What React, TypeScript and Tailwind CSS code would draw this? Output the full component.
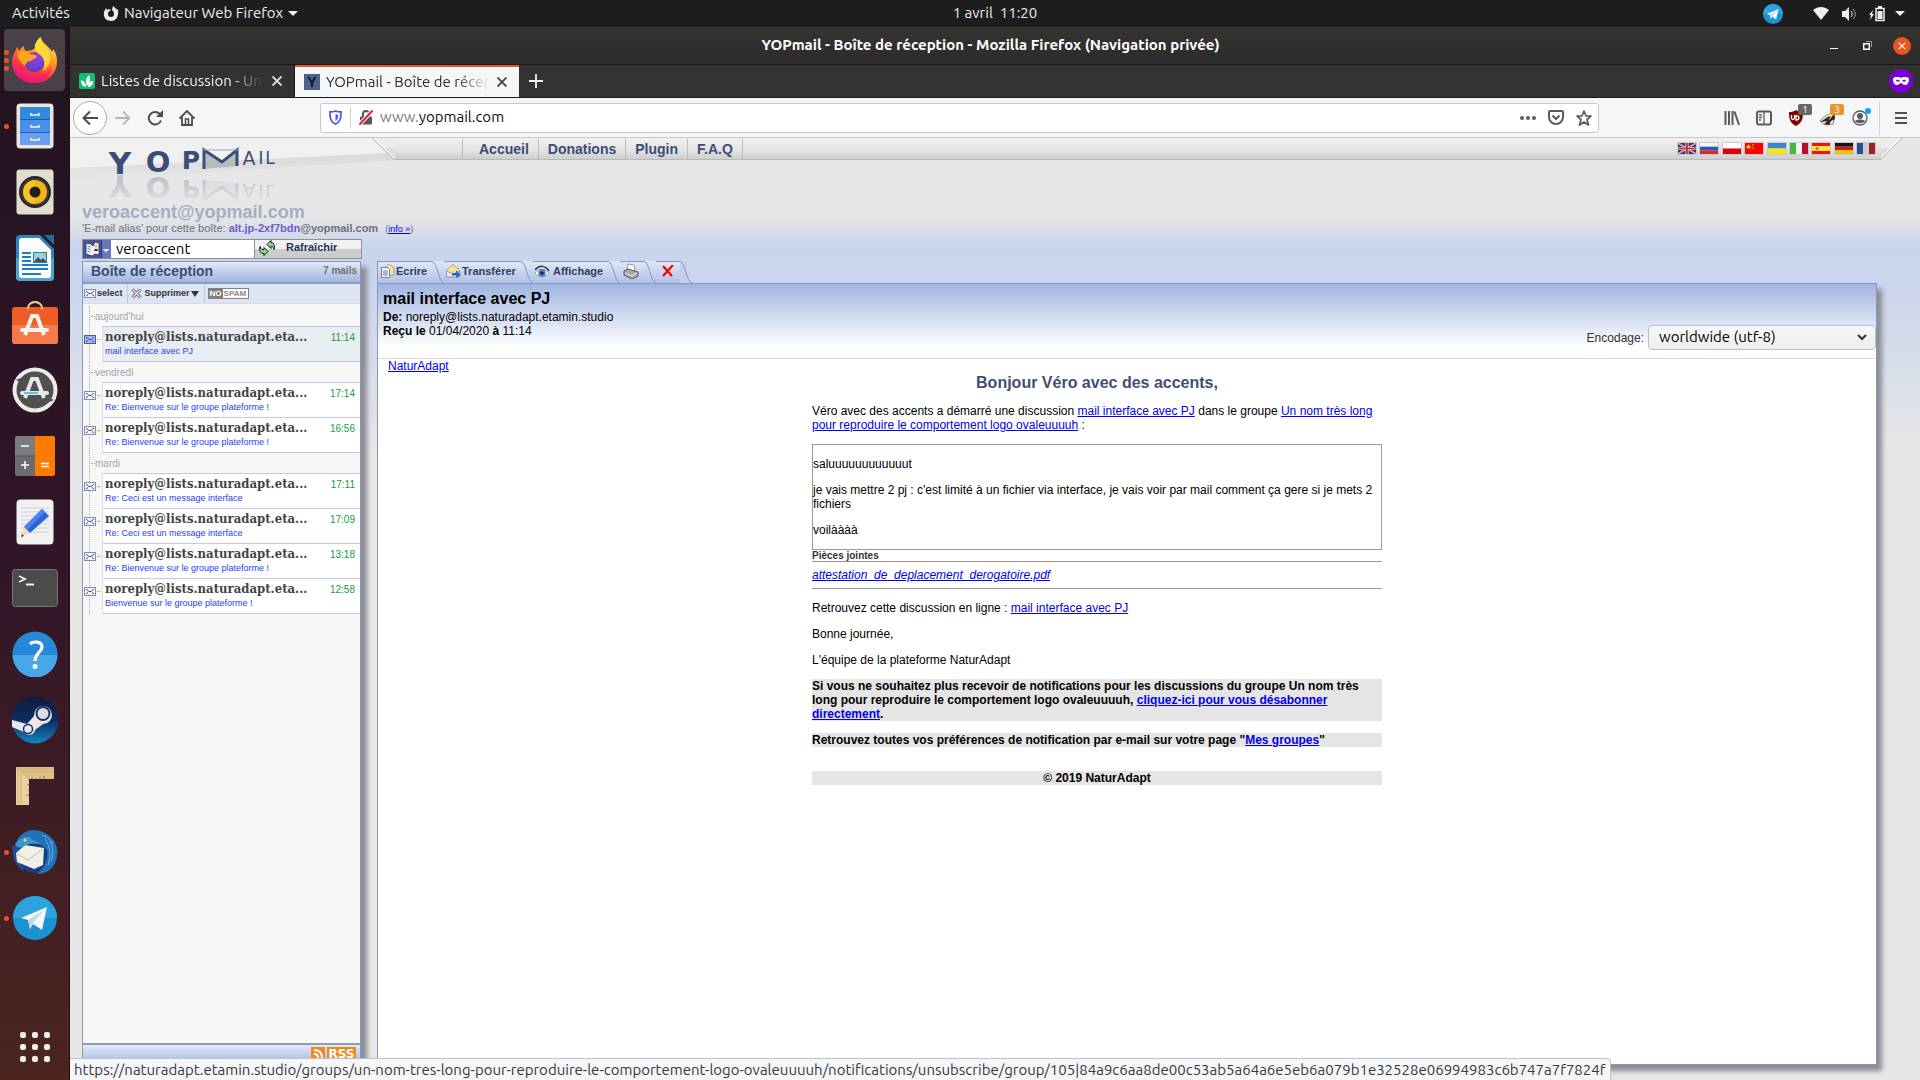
import type { ReactNode } from "react";

const UI_FONT = "font-['Ubuntu','Noto_Sans',sans-serif]";
const LINK = "text-[#0000ee] underline";

const groups = [
  {
    day: "aujourd'hui",
    mails: [{ time: "11:14", subject: "mail interface avec PJ", active: true }],
  },
  {
    day: "vendredi",
    mails: [
      { time: "17:14", subject: "Re: Bienvenue sur le groupe plateforme !" },
      { time: "16:56", subject: "Re: Bienvenue sur le groupe plateforme !" },
    ],
  },
  {
    day: "mardi",
    mails: [
      { time: "17:11", subject: "Re: Ceci est un message interface" },
      { time: "17:09", subject: "Re: Ceci est un message interface" },
      { time: "13:18", subject: "Re: Bienvenue sur le groupe plateforme !" },
      { time: "12:58", subject: "Bienvenue sur le groupe plateforme !" },
    ],
  },
];

/* ---------- Dock icons ---------- */

function FirefoxIcon() {
  return (
    <svg viewBox="0 0 46 46" className="size-[46px]">
      <defs>
        <linearGradient id="fx1" x1="0.8" y1="0" x2="0.3" y2="1">
          <stop offset="0" stopColor="#fff44f" />
          <stop offset="0.4" stopColor="#ff9a1f" />
          <stop offset="0.7" stopColor="#ff3647" />
          <stop offset="1" stopColor="#e31587" />
        </linearGradient>
        <radialGradient id="fx2" cx="0.5" cy="0.3" r="0.8">
          <stop offset="0" stopColor="#a238d8" />
          <stop offset="0.6" stopColor="#6a42d8" />
          <stop offset="1" stopColor="#4b2fae" />
        </radialGradient>
      </defs>
      <path d="M5 10c1 2 2 3 2 4 1-2 3-4 5-5 0 2 0 4 2 5 4 0 7-1 9-3-1-4 2-8 6-11 0 5 6 8 9 12 1 1 2 2 2 3 1-1 1-2 1-3 4 5 5 12 3 19-3 9-11 15-21 15C10 46 0 38 0 25 0 18 3 16 5 10z" fill="url(#fx1)" />
      <circle cx="22.500" cy="25" r="10" fill="url(#fx2)" />
      <path d="M6 16c5-4 9-2 12 1 2 1 5 0 7 2-1 3-5 3-6 5-3 0-5 1-6 5-4-3-8-7-7-13z" fill="#ffa21c" />
      <path d="M28 0c0 6 7 9 9 16 3 8-1 15-6 18 2-5 2-10-1-14-2-3-7-4-7-9 0-4 2-8 5-11z" fill="#ffdf3a" opacity="0.850" />
      <path d="M2 31c4 8 12 11 20 10 8 0 15-5 18-12-1 9-8 17-18 17C12 46 4 40 2 31z" fill="#f0186f" opacity="0.600" />
    </svg>
  );
}

function FilesIcon() {
  return (
    <svg viewBox="0 0 38 46" className="h-[46px] w-[38px]">
      <rect x="0.500" y="0.500" width="37" height="45" rx="4" fill="#ebe7df" />
      <rect x="4" y="4" width="30" height="13" fill="#2f8ae0" />
      <rect x="4" y="17" width="30" height="13" fill="#4990ea" />
      <rect x="4" y="30" width="30" height="12" fill="#6b9df2" />
      <path d="M4 16.500h30M4 29.500h30" stroke="#1a5fae" />
      <path d="M15 10v2h8v-2M15 22v2h8v-2M15 35v2h8v-2" stroke="#f2f2f2" strokeWidth="1.600" fill="none" />
    </svg>
  );
}

function SpeakerIcon() {
  return (
    <svg viewBox="0 0 38 46" className="h-[46px] w-[38px]">
      <rect x="0.500" y="0.500" width="37" height="45" rx="3" fill="#e3ddd0" />
      <circle cx="19" cy="23" r="16" fill="#24262e" />
      <circle cx="19" cy="23" r="14" fill="#3b3b3f" />
      <circle cx="19" cy="23" r="12" fill="#f2b712" />
      <path d="M7.500 20a12 12 0 0 1 11-9v24a12 12 0 0 1-11-9z" fill="#fcd53a" opacity="0.500" />
      <circle cx="19" cy="23" r="5.500" fill="#1f1f1f" />
    </svg>
  );
}

function WriterIcon() {
  return (
    <svg viewBox="0 0 38 46" className="h-[46px] w-[38px]">
      <path d="M4 0h20l14 14v28a4 4 0 0 1-4 4H4a4 4 0 0 1-4-4V4a4 4 0 0 1 4-4z" fill="#2c86ba" />
      <path d="M28 0h10v10z" fill="#1d6d9d" />
      <path d="M0 23h38v19a4 4 0 0 1-4 4H4a4 4 0 0 1-4-4z" fill="#4ba5d3" />
      <path d="M6 3h17l12 12v25a3 3 0 0 1-3 3H6a3 3 0 0 1-3-3V6a3 3 0 0 1 3-3z" fill="#fdfdfd" />
      <path d="M6 18h9M6 22h9M6 26h9M6 30h26M6 34h26M6 39h19" stroke="#1c80bd" strokeWidth="2" />
      <rect x="17.500" y="17.500" width="13" height="10" fill="#9bd0ee" stroke="#1c80bd" />
      <path d="M18 27l4-5 3 3 2-2 4 4z" fill="#4a4a4a" />
      <circle cx="28.500" cy="19.500" r="1.500" fill="#f5a623" />
    </svg>
  );
}

function BigA({ color }: { color: string }) {
  return (
    <g fill="none" stroke={color} strokeWidth="4">
      <path d="M13 31 20 12h5l7 19" />
      <path d="M10 26h25" strokeLinecap="round" />
    </g>
  );
}

function SoftwareIcon() {
  return (
    <svg viewBox="0 2 46 46" className="size-[46px]">
      <path d="M16 12V9a7 6 0 0 1 14 0v3" fill="none" stroke="#f3c58d" strokeWidth="2" />
      <rect x="0" y="8" width="46" height="37" rx="3" fill="#ee5d28" />
      <path d="M0 26h46v16a3 3 0 0 1-3 3H3a3 3 0 0 1-3-3z" fill="#f37a4a" />
      <path d="M16 11V9a7 6 0 0 1 14 0v2" fill="none" stroke="#f3c58d" strokeWidth="1.500" />
      <g transform="translate(0 5)">
        <BigA color="#fdf3ee" />
      </g>
    </svg>
  );
}

function UpdaterIcon() {
  return (
    <svg viewBox="0 0 46 46" className="size-[46px]">
      <circle cx="23" cy="23" r="22" fill="#505050" />
      <circle cx="23" cy="23" r="20.500" fill="none" stroke="#ececec" strokeWidth="4" />
      <path d="M4 13l7-3-3 5zM42 33l-7 3 3-5z" fill="#505050" />
      <BigA color="#e8e8e8" />
      <path d="M12 26h14" stroke="#32b8ef" strokeWidth="1.500" />
    </svg>
  );
}

function CalculatorIcon() {
  return (
    <svg viewBox="0 0 40 40" className="size-[40px]">
      <path d="M2 0h18v20H0V2a2 2 0 0 1 2-2z" fill="#7c7c80" />
      <path d="M0 20h20v20H2a2 2 0 0 1-2-2z" fill="#6b6b70" />
      <path d="M20 0h18a2 2 0 0 1 2 2v36a2 2 0 0 1-2 2H20z" fill="#ff7b00" />
      <path d="M6 10h8M6 29h8M10 25v8M26 27.500h8M26 30.500h8" stroke="#fff" strokeWidth="1.500" />
      <path d="M0 20h20" stroke="#505054" />
    </svg>
  );
}

function NotesIcon() {
  return (
    <svg viewBox="0 0 38 46" className="h-[46px] w-[38px]">
      <rect x="0.500" y="0.500" width="37" height="45" rx="4" fill="#f1f1f1" />
      <path d="M5 9h28M5 13h28M5 17h28M5 21h28M5 25h28M5 29h28M5 33h28" stroke="#cfcfcf" />
      <path d="M26 10l7 7-19 17-6-6z" fill="#2f62d9" />
      <path d="M26 10l3 3-18 18-3-3z" fill="#4a80f0" />
      <path d="M8 28l6 6-9 4z" fill="#f7d9b5" />
      <path d="M6 35l-1 3 3-1z" fill="#333" />
    </svg>
  );
}

function TerminalIcon() {
  return (
    <svg viewBox="0 0 46 38" className="h-[38px] w-[46px]">
      <rect x="0.500" y="0.500" width="45" height="37" rx="3" fill="#4b4b4b" stroke="#777" />
      <path d="M7 7l6 3-6 3M14 15.500h8" fill="none" stroke="#f4f4f4" strokeWidth="1.800" />
    </svg>
  );
}

function HelpIcon() {
  return (
    <svg viewBox="0 0 46 46" className="size-[46px]">
      <circle cx="23" cy="23" r="22.500" fill="#2588d8" />
      <path d="M.5 24a22.500 22.500 0 0 0 45 0z" fill="#48a5e6" />
      <path d="M18 13c3-3 12-3 12 3 0 5-7 6-7 14" fill="none" stroke="#fff" strokeWidth="3.200" />
      <circle cx="23" cy="35.500" r="2.500" fill="#fff" />
    </svg>
  );
}

function SteamIcon() {
  return (
    <svg viewBox="0 0 48 48" className="size-[48px]">
      <defs>
        <linearGradient id="steam" x1="0" y1="0" x2="0" y2="1">
          <stop offset="0" stopColor="#101c38" />
          <stop offset="0.5" stopColor="#0d2c63" />
          <stop offset="1" stopColor="#1485b9" />
        </linearGradient>
      </defs>
      <circle cx="24" cy="24" r="23.500" fill="url(#steam)" />
      <path d="M1 24l15 4 7-8a9 9 0 1 1 9 8l-8 6a6 6 0 0 1-11 2L1 31z" fill="#ebe6e8" />
      <circle cx="32" cy="17.500" r="6.500" fill="#dfdde3" stroke="#173063" strokeWidth="2" />
      <circle cx="17" cy="33" r="4.500" fill="none" stroke="#173063" strokeWidth="1.500" />
    </svg>
  );
}

function RulerIcon() {
  return (
    <svg viewBox="0 0 38 38" className="size-[38px]">
      <path d="M0 0h38v12H13v26H0z" fill="#dfc28b" />
      <path d="M0 0l13 12v26H0z" fill="#e9d09e" />
      <path d="M0 0l13 12M2 2v35M5 5v32M3 2h34M6 5h31" stroke="#c9a566" strokeWidth="0.700" />
      <path d="M16 12v-2m4 2v-1m4 1v-2m4 2V9M13 18h-2m2 5h-1m1 5h-3" stroke="#7d6236" strokeWidth="0.800" />
    </svg>
  );
}

function ThunderbirdIcon() {
  return (
    <svg viewBox="0 0 46 46" className="size-[46px]">
      <circle cx="24" cy="23" r="21" fill="#173f7d" />
      <path d="M6 10C12 0 24-1 33 4c12 6 15 19 10 30-3 7-10 11-18 11 8-7 12-15 10-24-4-6-12-8-18-6-5 2-8 4-11 2-2-2-2-4 0-7z" fill="#2471b8" />
      <path d="M33 10c5 7 7 16 3 26M38 12c3 7 4 13 1 20M30 6c4 1 8 4 11 9" stroke="#62b4e6" fill="none" />
      <path d="M0 17c0 12 4 20 12 26-2-9-3-17 2-27z" fill="#1f4e91" />
      <path d="M4 24l9-8 19 3-1 17-9 4-17-7z" fill="#f2efe6" />
      <path d="M5 25l11 6 15-11" fill="none" stroke="#c3bdad" />
      <path d="M3 15c4-5 9-8 15-7 2 4 8 5 12 7-7-1-14-1-20 3-3 1-6 0-7-3z" fill="#3f94d2" />
      <circle cx="13" cy="11" r="1.500" fill="#ffd65a" />
    </svg>
  );
}

function TelegramIcon({ className }: { className: string }) {
  return (
    <svg viewBox="0 0 44 44" className={className}>
      <circle cx="22" cy="22" r="22" fill="#1c93d1" />
      <path d="M0 22a22 22 0 0 1 44 0z" fill="#2ca3de" />
      <path d="M8 22l26-11-5 23-9-6-3 5-2-9z" fill="#f4f8fb" />
      <path d="M15 24l16-10-11 13-3 6z" fill="#c1d9ea" />
    </svg>
  );
}

function RunningDots({ count }: { count: number }) {
  return (
    <span className="absolute left-1 flex flex-col gap-[3px]">
      {[...Array(count)].map((_, i) => (
        <span key={i} className="size-[5px] rounded-full bg-[#e95420]" />
      ))}
    </span>
  );
}

function DockItem({ label, dots = 0, active, children }: { label: string; dots?: number; active?: boolean; children: ReactNode }) {
  return (
    <button aria-label={label} className="relative flex h-[66px] w-full items-center justify-center">
      {active && <span className="absolute inset-x-1 inset-y-[2px] rounded-[4px] bg-[#4a4047]" />}
      <span className="relative">{children}</span>
      {dots > 0 && <RunningDots count={dots} />}
    </button>
  );
}

function Dock() {
  return (
    <nav className="flex w-[70px] shrink-0 flex-col border-r border-[#1a1016] bg-linear-to-b from-[#22131f] via-[#311528] to-[#4b251e]">
      <DockItem label="Firefox" dots={3} active><FirefoxIcon /></DockItem>
      <DockItem label="Fichiers" dots={1}><FilesIcon /></DockItem>
      <DockItem label="Rhythmbox"><SpeakerIcon /></DockItem>
      <DockItem label="Writer"><WriterIcon /></DockItem>
      <DockItem label="Logiciels"><SoftwareIcon /></DockItem>
      <DockItem label="Mises à jour"><UpdaterIcon /></DockItem>
      <DockItem label="Calculatrice"><CalculatorIcon /></DockItem>
      <DockItem label="Notes"><NotesIcon /></DockItem>
      <DockItem label="Terminal"><TerminalIcon /></DockItem>
      <DockItem label="Aide"><HelpIcon /></DockItem>
      <DockItem label="Steam"><SteamIcon /></DockItem>
      <DockItem label="Règle"><RulerIcon /></DockItem>
      <DockItem label="Thunderbird" dots={1}><ThunderbirdIcon /></DockItem>
      <DockItem label="Telegram" dots={1}><TelegramIcon className="size-[44px]" /></DockItem>
      <button aria-label="Applications" className="mt-auto grid h-[66px] grid-cols-[6px_6px_6px] place-content-center gap-[6px]">
        {[...Array(9)].map((_, i) => (
          <span key={i} className="size-[6px] rounded-[2px] bg-[#eeeeec]" />
        ))}
      </button>
    </nav>
  );
}

/* ---------- Gnome top bar ---------- */

function TopBar() {
  return (
    <header className={`grid h-[27px] shrink-0 grid-cols-[70px_1fr_auto_1fr] items-center bg-[#1d1d1d] text-[15px] text-[#eeeeec] ${UI_FONT}`}>
      <button className="pl-3 text-left">Activités</button>
      <button className="flex items-center gap-[5px] pl-[33px]">
        <svg viewBox="0 0 16 16" className="size-4">
          <path d="M3 2l1 2 2-1 2 1c-1 1-3 1-3 4a3 3 0 0 0 6 0c0-2-1-3-2-4L10 0c1 1 3 2 4 4l1-1c1 8-2 12-7 12S0 11 1 6z" fill="#eeeeec" />
        </svg>
        Navigateur Web Firefox
        <svg viewBox="0 0 10 5" className="h-[5px] w-[10px]"><path d="M0 0h10L5 5z" fill="#eeeeec" /></svg>
      </button>
      <time className="whitespace-pre">1 avril  11:20</time>
      <div className="flex items-center justify-end pr-[15px]">
        <TelegramIcon className="mr-[30px] size-5" />
        <svg viewBox="0 0 16 13" className="mr-[12px] h-[13px] w-4"><path d="M0 3c5-4 11-4 16 0L8 13z" fill="#eeeeec" /></svg>
        <svg viewBox="0 0 16 14" className="mr-[12px] h-[14px] w-4">
          <path d="M1 4h3l4-4v14L4 10H1z" fill="#eeeeec" />
          <path d="M10 4c1.500 2 1.500 4 0 6" stroke="#eeeeec" fill="none" />
          <path d="M12 2c3 3 3 7 0 10" stroke="#aaa" fill="none" />
        </svg>
        <svg viewBox="0 0 16 16" className="mr-[10px] size-4">
          <path d="M4 4 0 9h2l-1 5 4-6H3z" fill="#eeeeec" />
          <path d="M7 2.500h8v12H7z" stroke="#eeeeec" strokeWidth="1.500" fill="none" />
          <path d="M9 0h4v2H9zM8.500 5h5v8h-5z" fill="#eeeeec" />
        </svg>
        <svg viewBox="0 0 10 5" className="h-[5px] w-[10px]"><path d="M0 0h10L5 5z" fill="#eeeeec" /></svg>
      </div>
    </header>
  );
}

/* ---------- Firefox chrome ---------- */

function CloseX({ color }: { color: string }) {
  return (
    <svg viewBox="0 0 10 10" className="size-[10px]">
      <path d="M.5.5l9 9M9.500.5l-9 9" stroke={color} strokeWidth="1.800" />
    </svg>
  );
}

function TitleBar() {
  return (
    <div className={`grid h-[37px] grid-cols-[1fr_auto_1fr] items-center bg-linear-to-b from-[#353430] to-[#2c2a2b] pr-[9px] text-[15px] font-bold text-white ${UI_FONT}`}>
      <span />
      <h1>YOPmail - Boîte de réception - Mozilla Firefox (Navigation privée)</h1>
      <div className="flex items-center justify-end">
        <button aria-label="Réduire" className="mr-[25px] flex h-4 w-2 items-end pb-[5px]"><span className="h-px w-full bg-white" /></button>
        <button aria-label="Restaurer" className="mr-[21px]">
          <svg viewBox="0 0 9 9" className="size-[9px]">
            <path d="M.7 2.700h5.600v5.600H.7z" stroke="#fff" strokeWidth="1.400" fill="none" />
            <path d="M3 .5h5.500V6" stroke="#999" fill="none" />
          </svg>
        </button>
        <button aria-label="Fermer" className="flex size-[18px] items-center justify-center rounded-full bg-[#e95420]">
          <svg viewBox="0 0 10 10" className="size-2"><path d="M1 1l8 8M9 1L1 9" stroke="#fff" strokeWidth="1.500" /></svg>
        </button>
      </div>
    </div>
  );
}

function TabBar() {
  return (
    <div className={`flex h-[34px] border-y border-[#1a1919] bg-[#333132] text-[15px] ${UI_FONT}`}>
      <div className="flex w-[225px] items-center border-r border-[#1a1919] pr-3 pl-[9px] text-[#f5f5f5]">
        <svg viewBox="0 0 16 16" className="mr-[6px] size-4 shrink-0">
          <rect width="16" height="16" rx="2" fill="#0fbf78" />
          <path d="M7 14C3 13 2 10 2 7c3 1 5 3 5 7zM8 13C6 9 7 5 10 2c2 4 1 8-2 11zM9 14c0-4 2-6 5-6 0 4-2 6-5 6z" fill="#fff" />
        </svg>
        <span className="mr-2 min-w-0 flex-1 overflow-hidden whitespace-nowrap [mask-image:linear-gradient(to_right,#000_78%,transparent)]">Listes de discussion - Un</span>
        <button aria-label="Fermer l'onglet"><CloseX color="#e6e6e6" /></button>
      </div>
      <div className="flex w-[224px] items-center border-t-2 border-[#e95420] bg-[#f5f6f7] pr-3 pl-[9px] text-[#2b2b2b]">
        <span className="mr-[6px] flex size-4 shrink-0 items-center justify-center bg-[#4d6287] font-['Liberation_Sans',sans-serif] text-[14px] font-bold text-[#10102c]">Y</span>
        <span className="mr-2 min-w-0 flex-1 overflow-hidden whitespace-nowrap [mask-image:linear-gradient(to_right,#000_80%,transparent)]">YOPmail - Boîte de réception</span>
        <button aria-label="Fermer l'onglet"><CloseX color="#444" /></button>
      </div>
      <button aria-label="Nouvel onglet" className="ml-[10px]">
        <svg viewBox="0 0 14 14" className="size-[14px]"><path d="M7 0v14M0 7h14" stroke="#f0f0f0" strokeWidth="1.800" /></svg>
      </button>
      <span className="mt-1 mr-[7px] ml-auto flex size-6 items-center justify-center rounded-full bg-[#7d00d3]">
        <svg viewBox="0 0 16 8" className="h-2 w-4">
          <path d="M0 2c0-2 5-3 8-1 3-2 8-1 8 1 0 4-2 6-4 6S9 6 8 6 6 8 4 8 0 6 0 2z" fill="#fff" />
          <path d="M3 4c1-2 3-1 4 0-1 1-3 1-4 0zM9 4c1-1 3-2 4 0-1 1-3 1-4 0z" fill="#7d00d3" />
        </svg>
      </span>
    </div>
  );
}

function Toolbar() {
  return (
    <div className={`flex h-[40px] items-center border-b border-[#c4c6c9] bg-[#f5f6f8] text-[15px] ${UI_FONT}`}>
      <button aria-label="Page précédente" className="ml-[3px] flex size-[34px] items-center justify-center rounded-full border border-[#ababab] bg-white">
        <svg viewBox="0 0 16 16" className="size-4"><path d="M16 8H1.500M8 1.500L1.500 8 8 14.500" stroke="#4a4a4c" strokeWidth="2" fill="none" /></svg>
      </button>
      <button aria-label="Page suivante" className="ml-2"><svg viewBox="0 0 16 16" className="size-4"><path d="M0 8h14.500M8 1.500L14.500 8 8 14.500" stroke="#b5b6b8" strokeWidth="1.800" fill="none" /></svg></button>
      <button aria-label="Actualiser" className="ml-4">
        <svg viewBox="0 0 16 16" className="size-4">
          <path d="M14 10.500A6.300 6.300 0 1 1 12.800 4" stroke="#4a4a4c" strokeWidth="2" fill="none" />
          <path d="M16 0v7H9z" fill="#4a4a4c" />
        </svg>
      </button>
      <button aria-label="Accueil du navigateur" className="ml-4">
        <svg viewBox="0 0 16 16" className="size-4">
          <path d="M.5 8.500L8 1l7.500 7.500M3 7v8h10V7" stroke="#4a4a4c" strokeWidth="1.800" fill="none" />
          <path d="M6.500 9h3v6h-3z" fill="none" stroke="#4a4a4c" strokeWidth="1.500" />
        </svg>
      </button>

      <div className="ml-[125px] flex h-[30px] flex-1 items-center rounded-[3px] border border-[#c3c9d2] bg-white pr-[6px] pl-2">
        <svg viewBox="0 0 14 16" className="h-[15px] w-[13px]">
          <path d="M7 1c2 1 4 1 6 1 0 7-1 11-6 13C2 13 1 9 1 2c2 0 4 0 6-1z" fill="none" stroke="#5a4fe0" strokeWidth="1.800" />
          <path d="M7 4v8c2-1 3-3 3-7-1 0-2 0-3-1z" fill="#3f68ea" />
        </svg>
        <span className="mx-2 h-[22px] w-px bg-[#cfd0d3]" />
        <svg viewBox="0 0 14 15" className="h-[15px] w-[14px]">
          <path d="M4 7V4a3 3 0 0 1 6 0v3" fill="none" stroke="#55565a" strokeWidth="2" />
          <rect x="1" y="6.500" width="12" height="8" rx="1" fill="#55565a" />
          <path d="M.5 14.500L13.500.5" stroke="#fff" strokeWidth="4" />
          <path d="M.5 14.500L13.500.5" stroke="#e8183e" strokeWidth="2" />
        </svg>
        <label htmlFor="url" className="ml-[7px] text-[#7b7b7d]">www.</label>
        <input id="url" defaultValue="yopmail.com" className="min-w-0 flex-1 bg-transparent text-[#0c0c0d] outline-none" />
        <button aria-label="Actions"><svg viewBox="0 0 16 4" className="h-1 w-4"><g fill="#5b5b5e"><circle cx="2" cy="2" r="2" /><circle cx="8" cy="2" r="2" /><circle cx="14" cy="2" r="2" /></g></svg></button>
        <button aria-label="Pocket" className="ml-3">
          <svg viewBox="0 0 16 15" className="h-[15px] w-4">
            <path d="M2 1h12a1 1 0 0 1 1 1v5a7 7 0 0 1-14 0V2a1 1 0 0 1 1-1z" fill="none" stroke="#5b5b5e" strokeWidth="2" />
            <path d="M4.500 5.500L8 9l3.500-3.500" fill="none" stroke="#5b5b5e" strokeWidth="2" />
          </svg>
        </button>
        <button aria-label="Marque-page" className="ml-3">
          <svg viewBox="0 0 16 16" className="size-4"><path d="M8 1l2 5h5l-4 3.500 1.500 5.500L8 12l-4.500 3L5 9.500 1 6h5z" fill="none" stroke="#5b5b5e" strokeWidth="1.700" strokeLinejoin="round" /></svg>
        </button>
      </div>

      <div className="ml-[125px] flex items-center gap-4">
        <svg viewBox="0 0 16 16" className="size-4"><path d="M1.500 1v14M5 1v14M8.500 1v14M10.500 1.500L15 15" stroke="#5b5b5e" strokeWidth="2" /></svg>
        <svg viewBox="0 0 16 16" className="size-4">
          <rect x="1" y="1.500" width="14" height="13" rx="2" fill="none" stroke="#5b5b5e" strokeWidth="2" />
          <path d="M8 2v12M3 5h3M3 7.500h3M3 10h2" stroke="#5b5b5e" strokeWidth="1.300" />
        </svg>
        <span className="relative">
          <svg viewBox="0 0 16 16" className="size-4">
            <path d="M8 0c2 1.500 4 2 7 2 0 7-1 11-7 14C2 13 1 9 1 2c3 0 5-.5 7-2z" fill="#800000" />
            <path d="M3.500 5v3c0 2 3 2 3 0V5M8 5v5c4 0 4-5 0-4" fill="none" stroke="#fff" strokeWidth="1.300" />
          </svg>
          <span className="absolute -top-[6px] left-[10px] flex h-[11px] w-[14px] items-center justify-center rounded-[2px] bg-[#666] text-[10px] text-white">1</span>
        </span>
        <span className="relative">
          <svg viewBox="0 0 16 16" className="size-4">
            <path d="M0 11c3-4 7-6 12-8l3 3-2 8-8 1z" fill="#f1efe9" stroke="#b7763a" />
            <path d="M0 12c4-2 6-5 11-6l-3 5zM4 14l6-5 4-5 1 5-4 2-2 4z" fill="#262626" />
          </svg>
          <span className="absolute -top-[6px] left-[10px] flex h-[11px] w-[14px] items-center justify-center rounded-[2px] bg-[#ec9329] text-[10px] text-white">3</span>
        </span>
        <span className="relative">
          <svg viewBox="0 0 16 16" className="size-4">
            <circle cx="8" cy="8" r="7" fill="none" stroke="#5b5b5e" strokeWidth="1.300" />
            <circle cx="8" cy="6" r="3" fill="#5b5b5e" />
            <path d="M3 11c1-1 3-1.500 5-1.500s4 .5 5 1.500c-2 3-8 3-10 0z" fill="#5b5b5e" />
          </svg>
          <span className="absolute -top-[2px] left-[13px] size-[6px] rounded-full bg-[#00a8f3]" />
        </span>
      </div>
      <span className="mr-[15px] ml-[11px] h-[34px] w-px bg-[#d4d5d8]" />
      <button aria-label="Menu" className="mr-[13px]"><svg viewBox="0 0 12 12" className="size-3"><path d="M0 1h12M0 6h12M0 11h12" stroke="#4f4f52" strokeWidth="2" /></svg></button>
    </div>
  );
}

/* ---------- YOPmail page ---------- */

function LogoLetters() {
  return (
    <g fill="#3b4d76" fontFamily="DejaVu Sans, sans-serif" textAnchor="middle">
      <g fontWeight="bold">
        <text x="50" y="36" fontSize="31">Y</text>
        <text x="88" y="34" fontSize="29">O</text>
        <text x="121" y="31" fontSize="25">P</text>
      </g>
      <text x="179" y="27" fontSize="19">A</text>
      <text x="191" y="26" fontSize="18">I</text>
      <text x="200" y="26" fontSize="17">L</text>
      <path d="M134 12h34l-17 14z" fill="#f2f3f4" />
      <path d="M134 12l18 13 16-13v16l-34 3z" fill="#a7b3b6" opacity="0.800" />
      <path d="M134 31V12l18 12 15-12v16" fill="none" stroke="#3b4d76" strokeWidth="3" />
      <path d="M133 12h36" stroke="#9aa5bb" />
    </g>
  );
}

function Logo() {
  return (
    <svg viewBox="0 0 330 70" className="absolute top-0 left-0 h-[70px] w-[330px]" role="img" aria-label="YOPmail">
      <defs>
        <linearGradient id="sweep" x1="0" y1="0" x2="0" y2="1">
          <stop offset="0" stopColor="#d9d9d9" />
          <stop offset="1" stopColor="#e7e7e7" />
        </linearGradient>
        <linearGradient id="fade" x1="0" y1="34" x2="0" y2="66" gradientUnits="userSpaceOnUse">
          <stop offset="0" stopColor="#e7e7e7" stopOpacity="0.700" />
          <stop offset="1" stopColor="#e7e7e7" stopOpacity="0.970" />
        </linearGradient>
      </defs>
      <path d="M0 29L325 14v8L0 44z" fill="url(#sweep)" />
      <path d="M0 0h302l18 15L0 30z" fill="#f0f0f0" />
      <LogoLetters />
      <g transform="matrix(1 0 0 -1 0 73)" aria-hidden="true"><LogoLetters /></g>
      <path d="M28 37h86l2-2h50l4-4h42v39H28z" fill="url(#fade)" />
    </svg>
  );
}

function Flag({ title, children }: { title: string; children: ReactNode }) {
  return (
    <button aria-label={title} className="border border-[#c9c9c9]">
      <svg viewBox="0 0 18 11" className="h-[11px] w-[18px]">{children}</svg>
    </button>
  );
}

function Stripes({ colors, vertical }: { colors: string[]; vertical?: boolean }) {
  const n = colors.length;
  return (
    <>
      {colors.map((c, i) =>
        vertical ? (
          <rect key={i} x={(18 / n) * i} width={18 / n} height="11" fill={c} />
        ) : (
          <rect key={i} y={(11 / n) * i} width="18" height={11 / n} fill={c} />
        )
      )}
    </>
  );
}

function SiteNav() {
  return (
    <div className="relative ml-[302px] mr-[18px] flex h-[22px]">
      <svg viewBox="0 0 23 22" className="h-[22px] w-[23px]">
        <path d="M0 0h23v22z" fill="#ededed" />
        <path d="M10 10h13v12z" fill="#dedede" />
        <path d="M0 0l22 21.500h1" stroke="#b5b5b5" fill="none" />
        <path d="M1 -1l22 21.500" stroke="#fff" fill="none" />
      </svg>
      <div className="flex flex-1 items-center border-b border-[#b9b9b9] bg-linear-to-b from-[#f1f1f1] from-0% via-[#e2e2e2] via-60% to-[#cecece] text-[14px] font-bold">
        <div className="ml-[67px] flex h-5 border-l border-[#bdbdbd] pl-[7px]">
          {["Accueil", "Donations", "Plugin", "F.A.Q"].map((item) => (
            <a key={item} href="#" className="border-r border-[#bdbdbd] px-[9px] leading-5 text-[#3b4d76]">{item}</a>
          ))}
        </div>
        <div className="mr-[5px] ml-auto flex w-[199px] justify-between">
          <Flag title="English">
            <rect width="18" height="11" fill="#2b3470" />
            <path d="M0 0l18 11M18 0L0 11" stroke="#fff" strokeWidth="1.500" />
            <path d="M0 0l18 11M18 0L0 11" stroke="#c8283c" strokeWidth="0.700" />
            <path d="M9 0v11M0 5.500h18" stroke="#fff" strokeWidth="3" />
            <path d="M9 0v11M0 5.500h18" stroke="#c8283c" strokeWidth="1.800" />
          </Flag>
          <Flag title="Russkiy"><Stripes colors={["#f5f5f5", "#2a5cb4", "#d52b2b"]} /></Flag>
          <Flag title="Polski"><Stripes colors={["#fff", "#d8000c"]} /></Flag>
          <Flag title="Zhongwen">
            <rect width="18" height="11" fill="#fb0007" />
            <path d="M3.500 1l1 2h2L5 4l.5 2-2-1-2 1L2 4 .5 3h2z" fill="#ffde00" />
            <circle cx="8" cy="2" r="0.800" fill="#ffde00" />
            <circle cx="8" cy="5" r="0.800" fill="#ffde00" />
          </Flag>
          <Flag title="Ukrainska"><Stripes colors={["#3a86d4", "#ffe319"]} /></Flag>
          <Flag title="Italiano"><Stripes vertical colors={["#48b83a", "#f3f3f3", "#b3122e"]} /></Flag>
          <Flag title="Español">
            <rect width="18" height="11" fill="#ea1317" />
            <rect y="3" width="18" height="5" fill="#ffe52e" />
            <circle cx="5" cy="5.500" r="1.500" fill="#c77b3a" />
          </Flag>
          <Flag title="Deutsch"><Stripes colors={["#151515", "#d81517", "#f2c400"]} /></Flag>
          <Flag title="Français"><Stripes vertical colors={["#27518c", "#c9ccd0", "#9a2125"]} /></Flag>
        </div>
      </div>
      <svg viewBox="0 0 21 22" className="h-[22px] w-[21px]">
        <path d="M0 0h21L0 21z" fill="#ededed" />
        <path d="M0 10h11L0 21z" fill="#dedede" />
        <path d="M21 0L0 21.500" stroke="#b5b5b5" fill="none" />
        <path d="M20 -1L0 20" stroke="#fff" fill="none" />
      </svg>
    </div>
  );
}

function Envelope({ active }: { active?: boolean }) {
  return (
    <svg viewBox="0 0 12 9" className="h-[9px] w-3">
      <rect x="0.500" y="0.500" width="11" height="8" fill={active ? "#a9b8ee" : "#f4f6fb"} stroke={active ? "#4a5a9c" : "#8c8c8c"} />
      <path d="M2 2l3 2.500h2L10 2M2 7l2-1.500M10 7L8 5.500" stroke="#2b4ea8" fill="none" />
    </svg>
  );
}

function MailRow({ time, subject, active }: { time: string; subject: string; active?: boolean }) {
  return (
    <li className="flex h-[35px]">
      <span className="flex h-6 w-[19px] items-center pl-px"><Envelope active={active} /><span className="ml-px w-1 border-t border-dotted border-[#aaa]" /></span>
      <a href="#" className={`flex min-w-0 flex-1 flex-col border-b border-l border-[#c4c4f7] border-l-[#ddd] pl-[2px] ${active ? "bg-[#e7edf1]" : "bg-white"}`}>
        <span className="mt-px flex h-[18px] items-center justify-between pr-[5px]">
          <span className="font-['DejaVu_Serif_Condensed','DejaVu_Serif',serif] text-[13px] font-bold text-[#444]">noreply@lists.naturadapt.eta...</span>
          <span className="text-[10px] text-[#159c3c]">{time}</span>
        </span>
        <span className="text-[9px] leading-[11px] text-[#2540f5]">{subject}</span>
      </a>
    </li>
  );
}

function Inbox() {
  return (
    <aside className="flex min-h-0 w-[279px] flex-1 flex-col border border-[#8797bd] bg-[#f7f7f7] shadow-[6px_6px_5px_#8a8c90]">
      <div className="flex h-[22px] shrink-0 items-center justify-between border-b-2 border-[#8c9cbe] bg-linear-to-b from-[#e4eaf7] to-[#a0b5df] pr-[3px] pb-[3px] pl-2 leading-4">
        <h2 className="text-[14px] font-bold text-[#3b4d76]">Boîte de réception</h2>
        <span className="text-[10px] font-bold text-[#6f7076]">7 mails</span>
      </div>
      <div className="flex h-[20px] shrink-0 items-center border-b border-[#d6dcea] bg-[#dde4f3] text-[9px] font-bold text-[#333]">
        <button className="flex h-full items-center gap-px border-r border-[#c2c8d6] pr-1 pl-px"><Envelope />select</button>
        <button className="flex h-full items-center gap-[3px] border-r border-[#c2c8d6] pr-[5px] pl-[3px]">
          <svg viewBox="0 0 11 11" className="size-[11px]">
            <path d="M1.500 1.500l8 8M9.500 1.500l-8 8" stroke="#555" strokeWidth="3" />
            <path d="M1.500 1.500l8 8M9.500 1.500l-8 8" stroke="#eee" strokeWidth="1.200" />
          </svg>
          <span className="flex items-center gap-px">Supprimer
            <svg viewBox="0 0 8 6" className="h-[6px] w-2"><path d="M0 0h8L4 6z" fill="#333" /></svg>
          </span>
        </button>
        <button className="ml-[3px] flex h-[11px] w-[41px] border border-[#808080] bg-white text-[8px] leading-[9px] text-[#8b8b8b]">
          <span className="bg-[#808080] px-px text-white">NO</span><span className="pl-px">SPAM</span>
        </button>
      </div>
      <div className="pt-[2px]">
        {groups.map((g) => (
          <section key={g.day} className="relative">
            <span className="absolute inset-y-0 left-[6px] border-l border-dotted border-[#aaa]" />
            <h3 className="flex h-5 items-center pl-2 text-[10px] text-[#a5a5a5]"><span className="w-1 border-t border-dotted border-[#aaa]" />{g.day}</h3>
            <ul className="relative before:absolute before:top-0 before:right-0 before:left-[19px] before:h-px before:bg-[#c4c4f7] pt-px">
              {g.mails.map((m) => <MailRow key={m.time} {...m} />)}
            </ul>
          </section>
        ))}
      </div>
      <div className="mt-auto flex h-[21px] shrink-0 items-start justify-end gap-[2px] border-t-2 border-[#8c9cbe] bg-linear-to-b from-[#e4eaf7] to-[#a0b5df] pt-[2px] pr-1">
        <svg viewBox="0 0 14 14" className="size-[14px]">
          <rect width="14" height="14" fill="#f08a1d" />
          <path d="M3 3c5 0 8 3 8 8M3 7c3 0 4 2 4 4" fill="none" stroke="#fff" strokeWidth="2" />
        </svg>
        <span className="h-[14px] w-[29px] bg-[#f08a1d] text-center font-['DejaVu_Sans',sans-serif] text-[12px] leading-[15px] font-bold text-white">RSS</span>
      </div>
    </aside>
  );
}

function Curve({ last }: { last?: boolean }) {
  return (
    <svg viewBox="0 0 12 22" className="h-[22px] w-3">
      {last && <path d="M0 0c6 1 5 18 12 22H0z" fill="#c3d0eb" />}
      <path d="M0 .5c6 1 5 18 12 21.500" fill="none" stroke="#8797bd" />
    </svg>
  );
}

function MailTabs() {
  const body = "flex h-[22px] items-center border-t border-[#8797bd] bg-linear-to-b from-[#e0e7f6] to-[#b0c1e5] pb-[3px]";
  return (
    <div className="flex h-[22px] text-[11px] font-bold text-[#2d3d66]">
      <div className="flex border-l border-[#8797bd] bg-linear-to-b from-[#e0e7f6] to-[#b0c1e5]">
        <button className={`${body} w-[54px] gap-px pl-[3px]`}>
          <svg viewBox="0 0 14 14" className="size-[14px]">
            <path d="M3 4l5-4 5 4v7H3z" fill="#f7e3a0" stroke="#aaa27a" />
            <path d="M.5 3.500h6l2 2v8h-8z" fill="#fff" stroke="#6b7fa8" />
            <path d="M2 7h5M2 9h5M2 11h5" stroke="#4b6cb0" />
          </svg>
          Ecrire
        </button>
        <Curve />
        <button className={`${body} w-[77px] gap-px pl-[2px]`}>
          <svg viewBox="0 0 15 14" className="h-[14px] w-[15px]">
            <path d="M.5 6L7 .5 13.500 6v7H.5z" fill="#f7e08e" stroke="#b0a888" />
            <path d="M.5 7L7 10l6.500-3v6H.5z" fill="#e9eefa" stroke="#8f9bb5" />
            <path d="M6 9h4V6.500l5 4-5 3.500v-2.500H6z" fill="#2a66cf" />
          </svg>
          Transférer
        </button>
        <Curve />
        <button className={`${body} w-[75px] gap-[3px] pl-[2px]`}>
          <svg viewBox="0 0 15 13" className="h-[13px] w-[15px]">
            <path d="M0 8c4-5 10-5 14 0-4 5-10 5-14 0z" fill="#fff" stroke="#999" />
            <circle cx="7" cy="8" r="3.800" fill="#3c83d8" />
            <circle cx="7" cy="8" r="1.600" fill="#111" />
            <path d="M0 5C4 0 10 0 14 6" fill="none" stroke="#333" strokeWidth="1.500" />
          </svg>
          Affichage
        </button>
        <Curve />
        <button aria-label="Imprimer" className={`${body} w-[24px] pl-[3px]`}>
          <svg viewBox="0 0 16 16" className="size-4">
            <path d="M4 7l1-6 6 1 1 6z" fill="#fff" stroke="#999" />
            <path d="M1 8l4-2 10 3v4l-6 3-8-4z" fill="#aaa" stroke="#555" />
            <path d="M2 10l7 3 5-3" fill="none" stroke="#eee" />
          </svg>
        </button>
        <Curve />
        <button aria-label="Supprimer" className={`${body} w-[24px] pl-[6px]`}>
          <svg viewBox="0 0 12 12" className="size-3"><path d="M1 1l9 10M11 0L1 11" stroke="#f50000" strokeWidth="2.200" /></svg>
        </button>
      </div>
      <Curve last />
    </div>
  );
}

function MailBody() {
  return (
    <div className="text-[12px] leading-[14px] text-black">
      <a href="#" className={`ml-[10px] ${LINK}`}>NaturAdapt</a>
      <div className="pt-px pr-[60px]">
        <article className="mx-auto flex w-full max-w-[570px] flex-col gap-3">
          <h2 className="text-center text-[16px] leading-[18px] font-bold text-[#3f4f75]">Bonjour Véro avec des accents,</h2>
          <p>
            Véro avec des accents a démarré une discussion <a href="#" className={LINK}>mail interface avec PJ</a> dans le groupe{" "}
            <a href="#" className={LINK}>Un nom très long pour reproduire le comportement logo ovaleuuuuh</a> :
          </p>
          <div>
            <div className="flex flex-col gap-3 border border-[#999] py-3">
              <p>saluuuuuuuuuuuut</p>
              <p>je vais mettre 2 pj : c'est limité à un fichier via interface, je vais voir par mail comment ça gere si je mets 2 fichiers</p>
              <p>voilàààà</p>
            </div>
            <h3 className="border-b border-[#999] text-[10px] leading-[11px] font-bold text-[#333]">Pièces jointes</h3>
            <p className="border-b border-[#999] py-[6px] italic"><a href="#" className={LINK}>attestation_de_deplacement_derogatoire.pdf</a></p>
          </div>
          <p>Retrouvez cette discussion en ligne : <a href="#" className={LINK}>mail interface avec PJ</a></p>
          <p>Bonne journée,</p>
          <p>L'équipe de la plateforme NaturAdapt</p>
          <p className="bg-[#e5e5e5] font-bold">
            Si vous ne souhaitez plus recevoir de notifications pour les discussions du groupe Un nom très long pour reproduire le comportement logo ovaleuuuuh,{" "}
            <a href="#" className={LINK}>cliquez-ici pour vous désabonner directement</a>.
          </p>
          <p className="bg-[#e5e5e5] font-bold">Retrouvez toutes vos préférences de notification par e-mail sur votre page "<a href="#" className={LINK}>Mes groupes</a>"</p>
          <p className="mt-3 bg-[#e5e5e5] text-center font-bold">© 2019 NaturAdapt</p>
        </article>
      </div>
    </div>
  );
}

function MailView() {
  return (
    <main className="flex min-w-0 flex-1 flex-col">
      <MailTabs />
      <div className="flex-1 border border-[#8797bd] bg-white shadow-[5px_6px_5px_#8a8c90]">
        <div className="flex h-[75px] justify-between border-b border-[#dcdcdc] bg-linear-to-b from-[#a0b5df] to-white to-85% pl-[5px]">
          <div className="pt-[6px] text-[12px] leading-[14px] text-black">
            <h2 className="mb-[2px] text-[16px] leading-[18px] font-bold">mail interface avec PJ</h2>
            <p><b>De:</b> noreply@lists.naturadapt.etamin.studio</p>
            <p><b>Reçu le</b> 01/04/2020 <b>à</b> 11:14</p>
          </div>
          <div className="mb-2 flex items-center gap-1 self-end text-[12px] text-[#333]">
            <label htmlFor="enc">Encodage:</label>
            <span className="relative">
              <select id="enc" className={`block h-[25px] w-[228px] appearance-none rounded-[4px] border border-[#b9bfc8] bg-linear-to-b from-[#f7f7f7] to-[#eceeef] pl-[10px] text-[15px] text-black ${UI_FONT}`}>
                <option>worldwide (utf-8)</option>
              </select>
              <svg viewBox="0 0 10 7" className="pointer-events-none absolute top-[9px] right-[9px] h-[7px] w-[10px]"><path d="M1 1l4 4 4-4" stroke="#333" strokeWidth="2" fill="none" /></svg>
            </span>
          </div>
        </div>
        <MailBody />
      </div>
    </main>
  );
}

function LoginRow() {
  return (
    <form className="flex h-5 w-[280px] shrink-0 border border-[#8f8f8f]">
      <button type="button" aria-label="Carnet" className="flex w-[28px] items-center bg-[#46569c]">
        <svg viewBox="0 0 28 18" className="h-[18px] w-7">
          <path d="M3 3l5 1 2 2 2-4 4 1v12l-4-1-3 2-6-2z" fill="#f1f3f8" stroke="#23305f" strokeWidth="0.800" />
          <path d="M4.500 6l3 1M4.500 8.500l3 1M4.500 11l3 1" stroke="#6c7bb0" />
          <circle cx="13" cy="6" r="1.700" fill="#f5c25a" />
          <path d="M11 11c0-3 4-3 4 0z" fill="#333" />
          <path d="M18.500 0h9.500v18h-9.500z" fill="#6876b6" />
          <path d="M18.500 0v18" stroke="#2d3870" />
          <path d="M19.500 9h7L23 12.500z" fill="#dfe3f2" />
        </svg>
      </button>
      <input aria-label="Nom de la boîte" defaultValue="veroaccent" className={`w-[144px] border-r border-[#8f8f8f] bg-white pl-[5px] text-[15px] text-black outline-none ${UI_FONT}`} />
      <button type="button" className="flex flex-1 items-center bg-linear-to-b from-[#f1f1f1] from-50% to-[#cccccc] to-50% pb-[3px] pl-1 text-[11px] font-bold text-[#26355e]">
        <svg viewBox="0 0 16 16" className="mr-[11px] size-4">
          <path d="M8 4.500l4-4v2c3 0 4 3 3 7-1-3-2-4-3-3v2z" fill="#8fe08a" stroke="#111" />
          <path d="M9 11.500l-4 4v-2c-4 0-5-3-4-7 1 3 3 4 4 3v-2z" fill="#8fe08a" stroke="#111" />
        </svg>
        Rafraîchir
      </button>
    </form>
  );
}

function YopmailPage() {
  return (
    <div className="relative flex min-h-0 flex-1 flex-col overflow-hidden bg-[#e7e7e7] bg-[linear-gradient(to_bottom,#e7e7e7_78px,#c9d4ee_108px,#cbd5ed_150px,#e7e7e7_320px)] font-['Liberation_Sans',Arial,sans-serif]">
      <Logo />
      <SiteNav />
      <div className="relative mt-[42px] ml-3">
        <p className="text-[18px] leading-[20px] font-bold text-[#a5adc6]">veroaccent@yopmail.com</p>
        <p className="text-[11px] leading-[13px] text-[#6f6f75]">
          'E-mail alias' pour cette boîte: <b><span className="text-[#6a5fcd]">alt.jp-2xf7bdn</span>@yopmail.com</b>
          <span className="ml-[7px] text-[9px]">(<a href="#" className={LINK}>info »</a>)</span>
        </p>
      </div>
      <div className="relative mt-[3px] mr-[43px] mb-[15px] ml-3 flex min-h-0 flex-1 gap-[15px]">
        <div className="flex flex-col gap-[2px]">
          <LoginRow />
          <Inbox />
        </div>
        <div className="flex min-w-0 flex-1 pt-[22px]">
          <MailView />
        </div>
      </div>
      <div className={`absolute bottom-0 left-0 h-[22px] rounded-tr-[4px] border-t border-r border-[#bfc3c9] bg-[#f5f6f8] pr-[5px] pl-1 text-[15px] leading-[22px] whitespace-nowrap text-[#38383d] ${UI_FONT}`}>
        https://naturadapt.etamin.studio/groups/un-nom-tres-long-pour-reproduire-le-comportement-logo-ovaleuuuuh/notifications/unsubscribe/group/105|84a9c6aa8de00c53ab5a64a6e5eb6a079b1e32528e06994983c6b747a7f7824f
      </div>
    </div>
  );
}

export default function App() {
  return (
    <div className="flex h-screen flex-col overflow-hidden">
      <TopBar />
      <div className="flex min-h-0 flex-1">
        <Dock />
        <div className="flex min-w-0 flex-1 flex-col">
          <TitleBar />
          <TabBar />
          <Toolbar />
          <YopmailPage />
        </div>
      </div>
    </div>
  );
}
